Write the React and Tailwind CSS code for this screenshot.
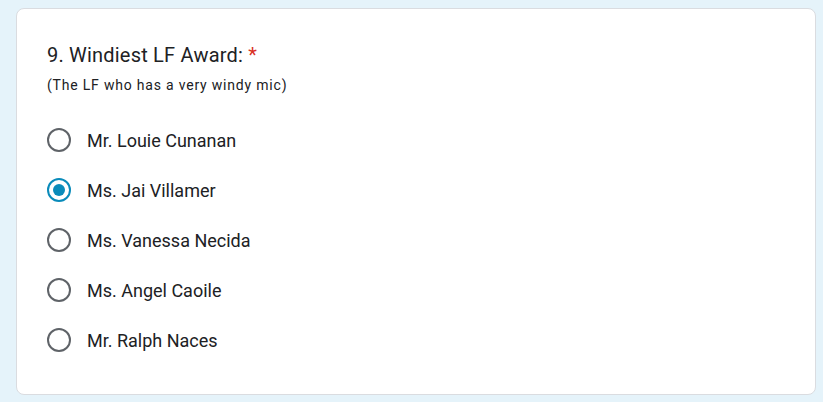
import React from "react";

const options = [
  "Mr. Louie Cunanan",
  "Ms. Jai Villamer",
  "Ms. Vanessa Necida",
  "Ms. Angel Caoile",
  "Mr. Ralph Naces",
];

export default function App() {
  const selected = 1;
  return (
    <div className="w-[823px] h-[402px] bg-[#e5f3fa] pt-2 pl-4 pr-[7px]" style={{ fontFamily: "Roboto, Arial, sans-serif" }}>
      <div className="w-[800px] h-[387px] bg-white border border-[#dadce0] rounded-lg pl-[30px] pt-[31px]">
        <div className="text-[20px] leading-[30px] text-[#202124] tracking-[0.2px]">
          9. Windiest LF Award: <span className="text-[#d93025]">*</span>
        </div>
        <div className="text-[14px] leading-[20px] text-[#202124] tracking-[0.8px] mt-[5px]">
          (The LF who has a very windy mic)
        </div>
        <div className="mt-[20px] flex flex-col">
          {options.map((o, i) => (
            <div key={o} className="h-[50px] flex items-center">
              <div
                className={
                  "w-6 h-6 rounded-full border-2 flex items-center justify-center " +
                  (i === selected ? "border-[#0a8bba]" : "border-[#5f6368]")
                }
              >
                {i === selected && <div className="w-3 h-3 rounded-full bg-[#0a8bba]" />}
              </div>
              <div className="ml-[16px] text-[18px] text-[#202124]">{o}</div>
            </div>
          ))}
        </div>
      </div>
    </div>
  );
}
